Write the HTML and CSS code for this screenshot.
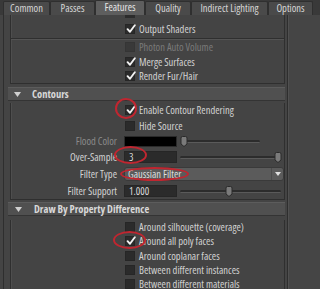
FILE: index.html
```html
<!DOCTYPE html>
<html>
<head>
<meta charset="utf-8">
<link rel="stylesheet" href="styles.css">
</head>
<body>
<div class="tabs">
  <div class="tab w47">Common</div>
  <div class="tab w45">Passes</div>
  <div class="tab active w50">Features</div>
  <div class="tab w46">Quality</div>
  <div class="tab w77">Indirect Lighting</div>
  <div class="tab w45">Options</div>
</div>
<div class="main">
  <div class="scrollarea">
    <div class="frame top">
      <div class="stub"><span class="stubbox"></span></div>
      <div class="row r-output"><span class="lbl"></span><span class="cb on"><svg viewBox="0 0 10 10"><path d="M1.6 5.2 L4 7.8 L8.8 1.2"/></svg></span><span>Output Shaders</span></div>
      <div class="sep"></div>
      <div class="row disabled"><span class="lbl"></span><span class="cb"></span><span>Photon Auto Volume</span></div>
      <div class="row r-merge"><span class="lbl"></span><span class="cb on"><svg viewBox="0 0 10 10"><path d="M1.6 5.2 L4 7.8 L8.8 1.2"/></svg></span><span>Merge Surfaces</span></div>
      <div class="row"><span class="lbl"></span><span class="cb on"><svg viewBox="0 0 10 10"><path d="M1.6 5.2 L4 7.8 L8.8 1.2"/></svg></span><span>Render Fur/Hair</span></div>
    </div>

    <div class="header h-contours"><svg class="tri" viewBox="0 0 7 5"><path d="M0 0 H7 L3.5 5 Z"/></svg><span class="htext">Contours</span></div>
    <div class="frame mid">
      <div class="row r-enable"><span class="lbl"></span><span class="cb on"><svg viewBox="0 0 10 10"><path d="M1.6 5.2 L4 7.8 L8.8 1.2"/></svg></span><span>Enable Contour Rendering</span></div>
      <div class="row r-hide"><span class="lbl"></span><span class="cb"></span><span>Hide Source</span></div>
      <div class="row r-flood"><span class="lbl dim">Flood Color</span><span class="swatch"></span>
        <div class="slider s-short"><div class="track"></div><svg class="thumb" style="left:0%" viewBox="0 0 8 11"><path d="M1 2 Q1 0.5 2.5 0.5 H5.5 Q7 0.5 7 2 V8 L4 10.5 L1 8 Z"/></svg></div>
      </div>
      <div class="row r-over"><span class="lbl">Over-Sample</span><span class="field">3</span>
        <div class="slider"><div class="track"></div><svg class="thumb" style="left:93%" viewBox="0 0 8 11"><path d="M1 2 Q1 0.5 2.5 0.5 H5.5 Q7 0.5 7 2 V8 L4 10.5 L1 8 Z"/></svg></div>
      </div>
      <div class="row r-type"><span class="lbl">Filter Type</span>
        <div class="dropdown"><span class="dd-text">Gaussian Filter</span><span class="dd-arrow"><svg viewBox="0 0 6 4"><path d="M0 0 H6 L3 4 Z"/></svg></span></div>
      </div>
      <div class="row r-support"><span class="lbl">Filter Support</span><span class="field">1.000</span>
        <div class="slider"><div class="track"></div><svg class="thumb" style="left:45%" viewBox="0 0 8 11"><path d="M1 2 Q1 0.5 2.5 0.5 H5.5 Q7 0.5 7 2 V8 L4 10.5 L1 8 Z"/></svg></div>
      </div>
    </div>

    <div class="header h-draw"><svg class="tri" viewBox="0 0 7 5"><path d="M0 0 H7 L3.5 5 Z"/></svg><span class="htext">Draw By Property Difference</span></div>
    <div class="frame bottom">
      <div class="row r-first"><span class="lbl"></span><span class="cb"></span><span>Around silhouette (coverage)</span></div>
      <div class="row"><span class="lbl"></span><span class="cb on"><svg viewBox="0 0 10 10"><path d="M1.6 5.2 L4 7.8 L8.8 1.2"/></svg></span><span>Around all poly faces</span></div>
      <div class="row r-gap"><span class="lbl"></span><span class="cb"></span><span>Around coplanar faces</span></div>
      <div class="row"><span class="lbl"></span><span class="cb"></span><span>Between different instances</span></div>
      <div class="row"><span class="lbl"></span><span class="cb"></span><span>Between different materials</span></div>
    </div>
  </div>
  <div class="scrollbar"></div>
</div>

<div class="mark m1"></div>
<div class="mark m2"></div>
<div class="mark m3"></div>
<div class="mark m4"></div>
</body>
</html>
```
FILE: styles.css
```css
html, body {
  margin: 0;
  padding: 0;
}
body {
  width: 320px;
  height: 289px;
  overflow: hidden;
  background: #444444;
  color: #d2d2d2;
  font-family: "Open Sans", "Liberation Sans", sans-serif;
  font-size: 10.5px;
  font-stretch: 78%;
  line-height: 1;
  position: relative;
}

/* tabs */
.tabs {
  display: flex;
  align-items: flex-end;
  height: 15px;
  padding-left: 3px;
  background: #393939;
  box-sizing: border-box;
}
.tab {
  height: 14px;
  box-sizing: border-box;
  display: flex;
  align-items: center;
  justify-content: center;
  background: #4a4a4a;
  border: 1px solid #2f2f2f;
  border-bottom: none;
  border-radius: 2px 2px 0 0;
  color: #d6d6d6;
  padding-bottom: 1px;
}
.tab.active {
  height: 15px;
  background: #5e5e5e;
  color: #e4e4e4;
}
.w45 { width: 45px; }
.w46 { width: 46px; }
.w47 { width: 47px; }
.w50 { width: 50px; }
.w77 { width: 77px; }

/* main */
.main {
  display: flex;
  height: 274px;
}
.scrollarea {
  width: 285px;
  margin-left: 3px;
  box-sizing: border-box;
  border-left: 1px solid #2e2e2e;
  border-right: 1px solid #2e2e2e;
  padding: 0 2px 0 4px;
  overflow: hidden;
  background: #444444;
}
.scrollbar {
  flex: 1;
  background: #454545;
  border-left: 1px solid #505050;
}

/* frames */
.frame {
  margin-left: 2px;
  border-left: 1px solid #2f2f2f;
  border-right: 1px solid #2f2f2f;
  box-shadow: inset 1px 0 0 #4e4e4e;
}
.frame.top {
  height: 68px;
  border-bottom: 1px solid #2f2f2f;
  margin-bottom: 3px;
}
.frame.mid {
  height: 97px;
  border-bottom: 1px solid #2f2f2f;
  margin-bottom: 2px;
  box-sizing: border-box;
}
.frame.bottom {
  height: 80px;
}

.stub {
  height: 3px;
  padding-left: 114px;
  margin-bottom: 4px;
}
.stubbox {
  display: block;
  width: 10px;
  height: 3px;
  background: #2c2c2c;
}
.sep {
  height: 1px;
  background: #2f2f2f;
  border-bottom: 1px solid #545454;
  margin: 2px 0 0 0;
}

/* header */
.header {
  display: flex;
  align-items: center;
  height: 14px;
  box-sizing: border-box;
  background: #505050;
  border-top: 1px solid #5c5c5c;
  border-bottom: 1px solid #343434;
  font-weight: 700;
  color: #d8d8d8;
}
.tri {
  width: 7px;
  height: 5px;
  margin-left: 6px;
  fill: #d0d0d0;
}
.htext {
  margin-left: 11px;
}
.h-draw .tri { margin-left: 7px; }
.h-draw .htext { margin-left: 12px; }

/* rows */
.row {
  display: flex;
  align-items: center;
  height: 14px;
  white-space: nowrap;
}
.r-merge { margin-top: 1px; }
.r-enable { margin-top: 2px; }
.r-hide { margin-top: 2px; }
.r-flood { margin-top: 1px; }
.r-over { margin-top: 2px; }
.r-type { margin-top: 3px; }
.r-support { margin-top: 3px; }
.r-first { margin-top: 4px; }
.r-gap { margin-top: 1px; }

.lbl {
  flex: none;
  width: 106px;
  margin-right: 7px;
  text-align: right;
}
.lbl.dim { color: #8a8a8a; }

.cb {
  flex: none;
  width: 10px;
  height: 10px;
  box-sizing: border-box;
  margin: 0 4px 0 1px;
  background: #2b2b2b;
  border: 1px solid #262626;
  position: relative;
}
.cb svg {
  position: absolute;
  left: 0;
  top: -1px;
  width: 10px;
  height: 10px;
  fill: none;
  stroke: #f2f2f2;
  stroke-width: 1.9;
  stroke-linecap: round;
  stroke-linejoin: round;
}
.disabled { color: #7a7a7a; }
.disabled .cb {
  background: #393939;
  border-color: #353535;
}

.swatch {
  flex: none;
  width: 53px;
  height: 11px;
  background: #000;
  box-sizing: border-box;
  border: 1px solid #2a2a2a;
}
.field {
  flex: none;
  width: 53px;
  height: 12px;
  box-sizing: border-box;
  background: #2b2b2b;
  border: 1px solid #262626;
  padding-left: 4px;
  display: flex;
  align-items: center;
  color: #dadada;
}

/* slider */
.slider {
  flex: none;
  position: relative;
  width: 101px;
  height: 11px;
  margin-left: 3px;
  display: flex;
  align-items: center;
}
.slider.s-short {
  width: 80px;
}
.track {
  width: 100%;
  height: 3px;
  box-sizing: border-box;
  background: #2c2c2c;
  border-bottom: 1px solid #5a5a5a;
  border-radius: 2px;
}
.s-short .track {
  margin-left: 6px;
}
.thumb {
  position: absolute;
  top: 0;
  width: 8px;
  height: 11px;
  fill: #7a7a7a;
  stroke: #2a2a2a;
  stroke-width: 1;
}

/* dropdown */
.dropdown {
  flex: none;
  width: 160px;
  height: 14px;
  box-sizing: border-box;
  background: #5b5b5b;
  border: 1px solid #3a3a3a;
  border-radius: 3px;
  display: flex;
  align-items: center;
}
.dd-text {
  flex: 1;
  padding-left: 3px;
  color: #dedede;
}
.dd-arrow {
  width: 11px;
  height: 12px;
  border-left: 1px solid #4c4c4c;
  display: flex;
  align-items: center;
  justify-content: center;
}
.dd-arrow svg {
  width: 6px;
  height: 4px;
  fill: #e0e0e0;
}

/* red annotation marks */
.mark {
  position: absolute;
  border: 2px solid #c02630;
  border-radius: 50%;
  box-sizing: border-box;
  pointer-events: none;
}
.m1 { left: 115px; top: 98px; width: 22px; height: 21px; }
.m2 { left: 114px; top: 146px; width: 33px; height: 18px; }
.m3 { left: 120px; top: 167px; width: 69px; height: 14px; }
.m4 { left: 113px; top: 231px; width: 33px; height: 18px; }
```
